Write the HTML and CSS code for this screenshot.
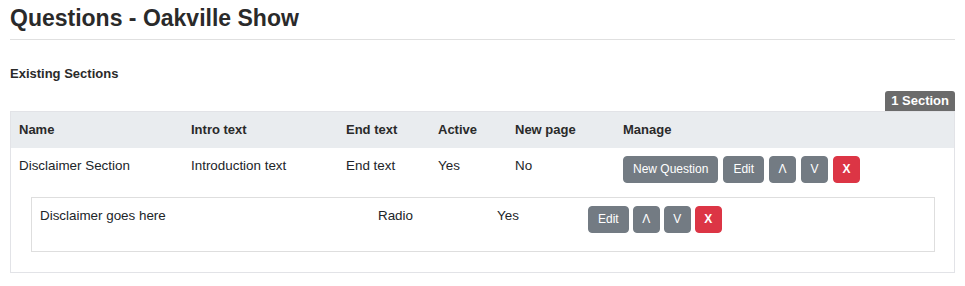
FILE: index.html
```html
<!DOCTYPE html>
<html lang="en">

<head>
    <meta charset="UTF-8">
    <meta name="viewport" content="width=device-width, initial-scale=1.0">
    <title>Questions - Oakville Show</title>
    <link rel="stylesheet" href="styles.css">
</head>

<body>

    <div class="page">
        <h3 class="page__title">Questions - Oakville Show</h3>

        <div class="sections-label">Existing Sections</div>

        <div class="badge-row">
            <span class="badge">1 Section</span>
        </div>

        <div class="section-box">
            <table class="section-table">
                <colgroup>
                    <col style="width: 172px">
                    <col style="width: 155px">
                    <col style="width: 92px">
                    <col style="width: 77px">
                    <col style="width: 108px">
                    <col>
                </colgroup>
                <thead>
                    <tr>
                        <th>Name</th>
                        <th>Intro text</th>
                        <th>End text</th>
                        <th>Active</th>
                        <th>New page</th>
                        <th>Manage</th>
                    </tr>
                </thead>
                <tbody>
                    <tr>
                        <td>Disclaimer Section</td>
                        <td>Introduction text</td>
                        <td>End text</td>
                        <td>Yes</td>
                        <td>No</td>
                        <td>
                            <div class="btn-group btn-group--wide">
                                <button class="btn">New Question</button>
                                <button class="btn">Edit</button>
                                <button class="btn btn--icon">Λ</button>
                                <button class="btn btn--icon">V</button>
                                <button class="btn btn--icon btn--danger">X</button>
                            </div>
                        </td>
                    </tr>
                    <tr>
                        <td colspan="6" class="questions-cell">
                            <div class="question-box">
                                <table class="question-table">
                                    <colgroup>
                                        <col style="width: 338px">
                                        <col style="width: 119px">
                                        <col style="width: 91px">
                                        <col>
                                    </colgroup>
                                    <tr>
                                        <td>Disclaimer goes here</td>
                                        <td>Radio</td>
                                        <td>Yes</td>
                                        <td>
                                            <div class="btn-group">
                                                <button class="btn">Edit</button>
                                                <button class="btn btn--icon">Λ</button>
                                                <button class="btn btn--icon">V</button>
                                                <button class="btn btn--icon btn--danger">X</button>
                                            </div>
                                        </td>
                                    </tr>
                                </table>
                            </div>
                        </td>
                    </tr>
                </tbody>
            </table>
        </div>
    </div>

</body>

</html>
```

FILE: styles.css
```css
body {
    margin: 0;
    background: #fff;
    color: #212529;
    font-family: "Liberation Sans", Arial, Helvetica, sans-serif;
    font-size: 13.4px;
}

.page {
    padding: 4px 10px 0 10px;
}

.page__title {
    margin: 0;
    font-size: 23px;
    line-height: 28px;
    font-weight: bold;
    color: #2a2a2a;
    padding-bottom: 7px;
    border-bottom: 1px solid #e0e0e0;
}

.sections-label {
    margin-top: 24px;
    font-size: 13px;
    font-weight: bold;
    line-height: 20px;
    color: #2a2a2a;
}

.badge-row {
    display: flex;
    justify-content: flex-end;
    margin-top: 7px;
}

.badge {
    display: inline-block;
    background: #6b6b6b;
    color: #fff;
    font-weight: bold;
    font-size: 13px;
    line-height: 14px;
    padding: 3px 6px;
    border-radius: 3px 3px 0 0;
}

.section-box {
    border: 1px solid #e2e3e7;
}

.section-table,
.question-table {
    width: 100%;
    border-collapse: collapse;
    table-layout: fixed;
}

.section-table th,
.section-table td,
.question-table td {
    text-align: left;
    vertical-align: top;
    padding: 8px;
    line-height: 20px;
}

.section-table th {
    background: #e9ecef;
    font-size: 13px;
    font-weight: bold;
    color: #2a2a2a;
}

.section-table td.questions-cell {
    padding: 6px 19px 20px 20px;
}

.question-box {
    border: 1px solid #dedede;
    padding-bottom: 10px;
}

.btn-group {
    display: flex;
    gap: 4px;
}

.btn-group--wide {
    gap: 5px;
}

.btn {
    font-family: "Liberation Sans", Arial, Helvetica, sans-serif;
    font-size: 12px;
    line-height: 17px;
    padding: 4px 9px;
    color: #fff;
    background: #737b83;
    border: 1px solid #737b83;
    border-radius: 4px;
    cursor: pointer;
}

.btn--icon {
    width: 27px;
    padding: 4px 0;
    text-align: center;
}

.btn--danger {
    background: #dc3545;
    border-color: #dc3545;
    font-weight: bold;
}
```
